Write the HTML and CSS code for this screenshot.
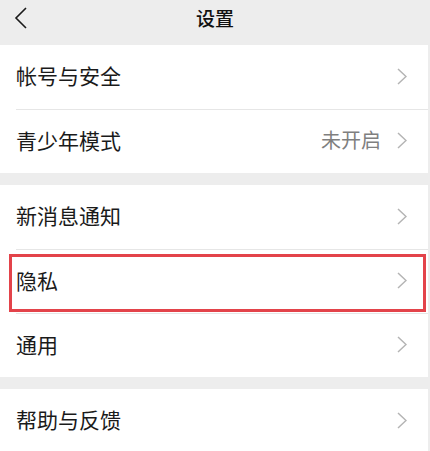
FILE: index.html
```html
<!DOCTYPE html>
<html lang="zh-CN">
<head>
<meta charset="utf-8">
<title>设置</title>
<link rel="stylesheet" href="styles.css">
</head>
<body>
<div class="page">
  <header class="topbar">
    <svg class="back" width="14" height="22" viewBox="0 0 14 22"><path d="M12 1 L2 11 L12 21" fill="none" stroke="#1a1a1a" stroke-width="1.6"/></svg>
    <h1 class="title">设置</h1>
  </header>
  <main class="content">
    <section class="group">
      <div class="row"><span class="label">帐号与安全</span><span class="right"><svg class="chev" width="10" height="17" viewBox="0 0 10 17"><path d="M1 1 L9 8.5 L1 16" fill="none" stroke="#b4b4b4" stroke-width="1.5"/></svg></span></div>
      <div class="row"><span class="label">青少年模式</span><span class="right"><span class="value">未开启</span><svg class="chev" width="10" height="17" viewBox="0 0 10 17"><path d="M1 1 L9 8.5 L1 16" fill="none" stroke="#b4b4b4" stroke-width="1.5"/></svg></span></div>
    </section>
    <section class="group">
      <div class="row"><span class="label">新消息通知</span><span class="right"><svg class="chev" width="10" height="17" viewBox="0 0 10 17"><path d="M1 1 L9 8.5 L1 16" fill="none" stroke="#b4b4b4" stroke-width="1.5"/></svg></span></div>
      <div class="row highlighted"><span class="label">隐私</span><span class="right"><svg class="chev" width="10" height="17" viewBox="0 0 10 17"><path d="M1 1 L9 8.5 L1 16" fill="none" stroke="#b4b4b4" stroke-width="1.5"/></svg></span><span class="mark"></span></div>
      <div class="row"><span class="label">通用</span><span class="right"><svg class="chev" width="10" height="17" viewBox="0 0 10 17"><path d="M1 1 L9 8.5 L1 16" fill="none" stroke="#b4b4b4" stroke-width="1.5"/></svg></span></div>
    </section>
    <section class="group">
      <div class="row"><span class="label">帮助与反馈</span><span class="right"><svg class="chev" width="10" height="17" viewBox="0 0 10 17"><path d="M1 1 L9 8.5 L1 16" fill="none" stroke="#b4b4b4" stroke-width="1.5"/></svg></span></div>
    </section>
  </main>
</div>
</body>
</html>
```
FILE: styles.css
```css
html, body {
  margin: 0;
  padding: 0;
  background: #ededed;
  font-family: "Noto Sans CJK SC", "Noto Sans", sans-serif;
  color: #1a1a1a;
}
.page {
  width: 430px;
  height: 451px;
  overflow: hidden;
  background: #ededed;
}
.topbar {
  height: 45px;
  display: flex;
  align-items: center;
  justify-content: center;
  position: relative;
  background: #ededed;
}
.back {
  position: absolute;
  left: 14px;
  top: 7px;
}
.title {
  margin: 0;
  font-size: 19px;
  font-weight: 500;
  line-height: 1;
  margin-top: -10px;
  color: #111;
}
.content {
  display: flex;
  flex-direction: column;
  gap: 12px;
  width: 428px;
}
.group {
  background: #fff;
}
.row {
  position: relative;
  box-sizing: border-box;
  height: 64px;
  display: flex;
  align-items: center;
  justify-content: space-between;
  padding-left: 16px;
  padding-right: 21px;
  padding-bottom: 3px;
}
.row + .row {
  border-top: 1px solid #e6e6e6;
}
.row + .row::before {
  content: "";
  position: absolute;
  left: 0;
  top: -1px;
  width: 16px;
  height: 1px;
  background: #fff;
}
.label {
  font-size: 21px;
  line-height: 1;
  color: #1a1a1a;
}
.right {
  display: flex;
  align-items: center;
  gap: 16px;
}
.value {
  font-size: 20px;
  line-height: 1;
  color: #7f7f7f;
}
.chev {
  display: block;
  margin-top: 1px;
}
.mark {
  position: absolute;
  left: 9px;
  top: 4px;
  width: 411px;
  height: 52px;
  border: 3px solid #e3434a;
}
```
